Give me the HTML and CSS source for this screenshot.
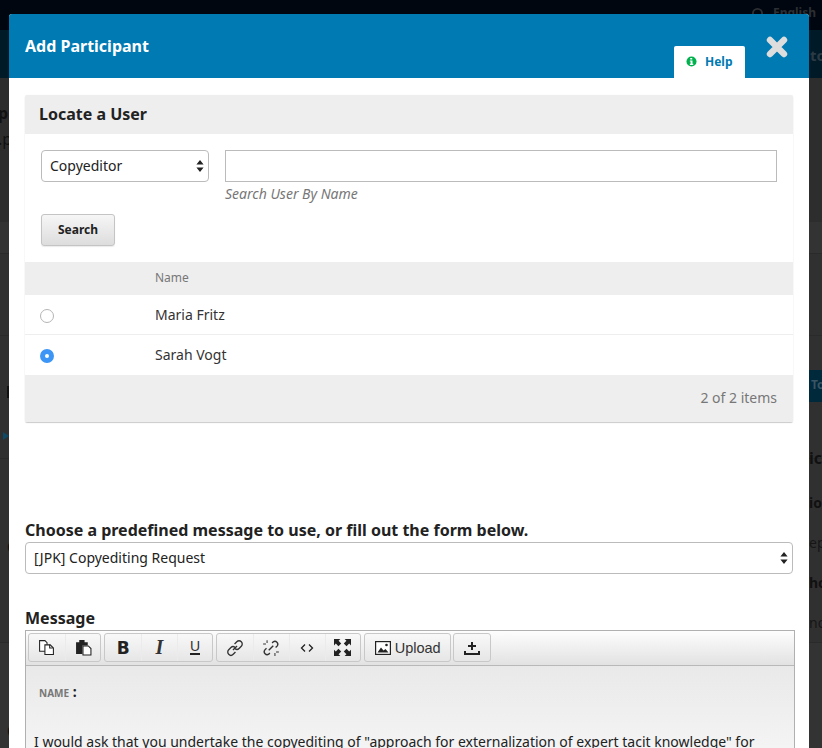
FILE: index.html
```html
<!DOCTYPE html>
<html lang="en">
  <head>
    <meta charset="UTF-8" />
    <meta name="viewport" content="width=device-width, initial-scale=1.0" />
    <title>Add Participant</title>
    <link rel="stylesheet" href="styles.css">
  </head>
  <body>
    <!-- page behind the modal, only the edges show -->
    <div class="backdrop">
      <div class="top-bar">
        <svg class="globe" viewBox="0 0 12 12" width="11" height="11"><circle cx="6" cy="6" r="5" fill="none" stroke="#2c2f33" stroke-width="2" /></svg>
        <span class="lang">English</span>
      </div>
      <div class="nav-bar"><span class="nav-peek">to</span></div>
      <div class="page-body">
        <div class="side side-left">
          <div class="peek peek-l1">p</div>
          <div class="peek peek-l2">.p</div>
          <div class="peek-mark"></div>
          <div class="peek-tri"></div>
          <div class="peek peek-l4">C</div>
          <div class="peek peek-l5">C</div>
        </div>
        <div class="side side-right">
          <div class="peek-btn">To</div>
          <div class="peek peek-r1">ic</div>
          <div class="peek peek-r2">ior</div>
          <div class="peek peek-r3 thin">ep</div>
          <div class="peek peek-r4">hor</div>
          <div class="peek peek-r5 thin">nos</div>
        </div>
      </div>
    </div>

    <div class="modal">
      <div class="modal-head">
        <h2>Add Participant</h2>
        <a class="help-tab">
          <svg class="help-icon" viewBox="0 0 12 12" width="11" height="11">
            <circle cx="6" cy="6" r="5.5" fill="#00b24e" />
            <path d="M4.6 2.2h2.2v1.6H4.6zM4.2 4.8h2.9v3.6h.8v1.3H4.2V8.4H5V6.1h-.8z" fill="#fff" />
          </svg>
          Help
        </a>
        <svg class="close-icon" viewBox="0 0 22 22" width="22" height="22">
          <path d="M4 4l14 14M18 4L4 18" stroke="#ddd" stroke-width="6.4" stroke-linecap="round" />
        </svg>
      </div>

      <div class="modal-body">
        <div class="panel">
          <div class="panel-head">Locate a User</div>
          <div class="search-form">
            <div class="search-row">
              <div class="select role-select">
                Copyeditor
                <svg class="select-arrows" viewBox="0 0 8 12" width="8" height="12"><path d="M4 0l3.6 4.6H.4zM4 12L.4 7.4h7.2z" fill="#222" /></svg>
              </div>
              <div class="search-field">
                <input type="text" class="search-input" />
                <div class="hint">Search User By Name</div>
              </div>
            </div>
            <button type="button" class="search-btn">Search</button>
          </div>
          <div class="table-head">
            <span class="col-radio"></span>
            <span>Name</span>
          </div>
          <div class="table-row row-line">
            <span class="col-radio"><span class="radio"></span></span>
            <span>Maria Fritz</span>
          </div>
          <div class="table-row">
            <span class="col-radio"><span class="radio radio-on"></span></span>
            <span>Sarah Vogt</span>
          </div>
          <div class="table-foot">2 of 2 items</div>
        </div>

        <label class="field-label predefined">Choose a predefined message to use, or fill out the form below.</label>
        <div class="select message-select">
          [JPK] Copyediting Request
          <svg class="select-arrows" viewBox="0 0 8 12" width="8" height="12"><path d="M4 0l3.6 4.6H.4zM4 12L.4 7.4h7.2z" fill="#222" /></svg>
        </div>

        <label class="field-label message-label">Message</label>
        <div class="editor">
          <div class="toolbar">
            <div class="tool-group">
              <span class="tool">
                <svg viewBox="0 0 16 16" width="17" height="17" fill="#fff" stroke="#222" stroke-width="1"><path d="M1.5 1.500h5l2 2v8h-7z" /><path d="M6.500 5.500h5l3 3v6h-8z" /><path d="M11 5.500v3h3" fill="none" /></svg>
              </span>
              <span class="tool">
                <svg viewBox="0 0 16 16" width="17" height="17"><path d="M1 3h3V1h5v2h3v3H7v8H1z" fill="#222" /><path d="M7.500 6.500h5l2.500 2.500v6H7.500z" fill="#fff" stroke="#222" /></svg>
              </span>
            </div>
            <div class="tool-group">
              <span class="tool"><b class="glyph-b">B</b></span>
              <span class="tool"><b class="glyph-i">I</b></span>
              <span class="tool"><span class="glyph-u">U</span></span>
            </div>
            <div class="tool-group">
              <span class="tool">
                <svg viewBox="0 0 16 16" width="18" height="18" fill="none" stroke="#333" stroke-width="1.200"><path d="M6.200 9.800L9.800 6.200" /><path d="M7.600 4.400l2-2a2.600 2.600 0 0 1 4 4l-2 2a2.600 2.600 0 0 1-3.600 0" /><path d="M8.400 11.600l-2 2a2.600 2.600 0 0 1-4-4l2-2a2.600 2.600 0 0 1 3.600 0" /></svg>
              </span>
              <span class="tool">
                <svg viewBox="0 0 16 16" width="18" height="18" fill="none" stroke="#333" stroke-width="1.200"><path d="M9 3.500l1-1a2.600 2.600 0 0 1 3.600 3.600l-1.500 1.500" /><path d="M7 12.500l-1 1A2.600 2.600 0 0 1 2.400 9.900L4 8.300" /><path d="M6 10l4-4" /><path d="M4.500 1v2.500M1 4.500h2.500M11.500 15v-2.500M15 11.500h-2.500" stroke-width=".9" /></svg>
              </span>
              <span class="tool">
                <svg viewBox="0 0 16 16" width="16" height="16" fill="none" stroke="#222" stroke-width="1.300"><path d="M6 4.500L2.500 8 6 11.500M10 4.500L13.500 8 10 11.500" /></svg>
              </span>
              <span class="tool">
                <svg viewBox="0 0 16 16" width="17" height="17" fill="#222"><path d="M0 0h6L4.300 1.700 6.800 4.200 4.200 6.800 1.700 4.300 0 6zM16 0v6l-1.700-1.700-2.500 2.500-2.600-2.600 2.500-2.500L10 0zM0 16v-6l1.700 1.700 2.500-2.500 2.600 2.600-2.500 2.500L6 16zM16 16h-6l1.700-1.700-2.500-2.500 2.600-2.600 2.500 2.500L16 10z" /></svg>
              </span>
            </div>
            <div class="tool-group">
              <span class="tool tool-upload">
                <svg viewBox="0 0 16 14" width="16" height="14"><rect x=".6" y=".6" width="14.800" height="12.800" fill="#fff" stroke="#222" stroke-width="1.200" /><path d="M2.500 11.500l3.500-5 2.500 3 2-1.500 3 3.500z" fill="#222" /><circle cx="11.500" cy="4" r="1.300" fill="#222" /></svg>
                Upload
              </span>
            </div>
            <div class="tool-group insert-group">
              <span class="tool tool-insert">
                <svg viewBox="0 0 16 14" width="16" height="14" fill="#222"><path d="M7 1h2v3h3v2H9v3H7V6H4V4h3zM0 10h2v2h12v-2h2v4H0z" /></svg>
              </span>
            </div>
          </div>
          <div class="editor-content">
            <p class="name-line"><span class="name-tag">NAME</span> <span class="colon">:</span></p>
            <p class="body-text">I would ask that you undertake the copyediting of "approach for externalization of expert tacit knowledge" for</p>
          </div>
        </div>
      </div>
    </div>
  </body>
</html>
```

FILE: styles.css
```css
* {
  box-sizing: border-box;
}
html,
body {
  margin: 0;
  height: 748px;
  overflow: hidden;
}
body {
  font-family: "Noto Sans", Arial, sans-serif;
  font-size: 14px;
  color: #222;
  background: #2e2e2e;
}

/* page behind the modal */
.backdrop {
  height: 748px;
  overflow: hidden;
  display: flex;
  flex-direction: column;
}
.top-bar {
  height: 30px;
  flex: none;
  background: #00060f;
  display: flex;
  justify-content: flex-end;
  gap: 10px;
  padding: 5px 6px 0 0;
}
.globe {
  margin-top: 3px;
}
.lang {
  font-size: 12px;
  font-weight: 700;
  color: #2c2f33;
  line-height: 16px;
}
.nav-bar {
  height: 48px;
  flex: none;
  background: #001a28;
  display: flex;
  justify-content: flex-end;
}
.nav-peek {
  width: 13px;
  font-size: 15px;
  font-weight: 700;
  color: #2b3a44;
  line-height: 50px;
  padding-left: 1px;
  overflow: hidden;
}
.page-body {
  flex: 1;
  display: flex;
  justify-content: space-between;
  background: linear-gradient(
    #2d2d2d 0,
    #2d2d2d 144px,
    #333 144px,
    #333 175px,
    #2a2a2a 175px,
    #2a2a2a 176px,
    #303030 176px,
    #303030 257px,
    #2a2a2a 257px,
    #2a2a2a 258px,
    #303030 258px,
    #303030 380px,
    #2a2a2a 380px,
    #2a2a2a 381px,
    #303030 381px,
    #303030 564px,
    #2a2a2a 564px,
    #2a2a2a 565px,
    #333 565px,
    #333 100%
  );
}
.side {
  overflow: hidden;
  font-weight: 700;
  color: #111;
  line-height: 20px;
}
.side-left {
  width: 9px;
  padding-top: 25px;
}
.side-right {
  width: 13px;
  padding-top: 292px;
}
.peek {
  white-space: nowrap;
  height: 20px;
}
.side-left .peek {
  font-size: 16px;
}
.thin {
  font-weight: 400;
  color: #161616;
}
.peek-l1 {
  margin-left: -2px;
}
.peek-l2 {
  margin: 6px 0 0 -2px;
  font-weight: 400;
}
.peek-mark {
  width: 2px;
  height: 12px;
  background: #111;
  margin: 237px 0 0 7px;
}
.peek-tri {
  width: 0;
  margin: 34px 0 0 3px;
  border-left: 6px solid #0d4a66;
  border-top: 4px solid transparent;
  border-bottom: 4px solid transparent;
}
.peek-l4 {
  margin: 97px 0 0 7px;
}
.peek-l5 {
  margin: 164px 0 0 7px;
}
.peek-btn {
  height: 32px;
  background: #00293c;
  color: #3a5564;
  font-size: 12px;
  line-height: 30px;
  padding-left: 2px;
}
.peek-r1 {
  margin-top: 46px;
  font-size: 16px;
}
.peek-r2 {
  margin-top: 25px;
  font-size: 14px;
}
.peek-r3 {
  margin-top: 20px;
  font-size: 14px;
}
.peek-r4 {
  margin-top: 20px;
  font-size: 14px;
}
.peek-r5 {
  margin-top: 20px;
  font-size: 14px;
}

/* modal */
.modal {
  position: absolute;
  left: 9px;
  top: 14px;
  width: 800px;
  height: 734px;
  background: #fff;
  overflow: hidden;
  border-radius: 3px 3px 0 0;
}
.modal-head {
  height: 64px;
  background: #007ab2;
  display: flex;
  align-items: flex-start;
  padding-left: 16px;
}
.modal-head h2 {
  margin: 0;
  flex: 1;
  font-size: 16px;
  line-height: 64px;
  font-weight: 700;
  color: #fff;
}
.help-tab {
  margin-top: 32px;
  width: 71px;
  height: 32px;
  background: #fff;
  border-radius: 2px 2px 0 0;
  display: flex;
  align-items: center;
  gap: 8px;
  padding: 0 0 2px 12px;
  font-size: 12px;
  font-weight: 700;
  color: #007ab2;
}
.help-icon {
  margin-top: 1px;
}
.close-icon {
  margin: 22px 21px 0 21px;
}
.modal-body {
  padding: 17px 16px 0;
}

/* user search panel */
.panel {
  border-radius: 2px;
  box-shadow: 0 1px 1px rgba(0, 0, 0, 0.2), 0 0 1px rgba(0, 0, 0, 0.08);
}
.panel-head {
  height: 39px;
  background: #eee;
  border-radius: 2px 2px 0 0;
  padding-left: 14px;
  font-size: 16px;
  font-weight: 700;
  line-height: 39px;
  color: #222;
}
.search-form {
  padding: 16px;
}
.search-row {
  display: flex;
  gap: 16px;
}
.select {
  position: relative;
  height: 32px;
  background: #fff;
  border: 1px solid #bbb;
  border-radius: 4px;
  line-height: 30px;
  padding-left: 8px;
  font-size: 14px;
  color: #222;
}
.role-select {
  width: 168px;
  flex: none;
}
.select-arrows {
  position: absolute;
  right: 4px;
  top: 9px;
}
.search-field {
  flex: 1;
}
.search-input {
  display: block;
  width: 100%;
  height: 32px;
  border: 1px solid #bbb;
  background: #fff;
  border-radius: 0;
  margin: 0;
}
.hint {
  font-size: 14px;
  font-style: italic;
  line-height: 24px;
  color: #777;
}
.search-btn {
  display: block;
  margin-top: 8px;
  width: 74px;
  height: 32px;
  padding: 0 0 2px;
  background: linear-gradient(#f6f6f6, #ddd);
  border: 1px solid #c4c4c4;
  border-radius: 3px;
  font-family: inherit;
  font-size: 12px;
  font-weight: 700;
  color: #222;
  box-shadow: 0 1px 1px rgba(0, 0, 0, 0.08);
}
.table-head {
  height: 33px;
  padding-bottom: 2px;
  background: #eee;
  display: flex;
  align-items: center;
  font-size: 12px;
  color: #777;
}
.col-radio {
  width: 130px;
  flex: none;
  padding-left: 15px;
  display: flex;
  align-items: center;
}
.table-row {
  height: 40px;
  display: flex;
  align-items: center;
  line-height: 38px;
  color: #333;
}
.row-line {
  border-bottom: 1px solid #eee;
}
.radio {
  width: 14px;
  height: 14px;
  margin-top: 2px;
  border: 1.5px solid #b5b5b5;
  border-radius: 50%;
  background: #fff;
}
.radio-on {
  border: 5px solid #3d96f5;
}
.table-foot {
  height: 47px;
  background: #eee;
  text-align: right;
  padding-right: 16px;
  line-height: 46px;
  color: #777;
}

/* email form */
.field-label {
  display: block;
  font-size: 16px;
  font-weight: 700;
  line-height: 22px;
  color: #222;
}
.predefined {
  margin-top: 97px;
}
.message-select {
  margin-top: 1px;
  width: 768px;
  height: 32px;
  line-height: 30px;
}
.message-label {
  margin-top: 33px;
}
.editor {
  width: 770px;
  margin-top: 1px;
  border: 1px solid #b0b0b0;
  border-bottom: 0;
}
.toolbar {
  height: 35px;
  padding: 2px 2px 0;
  display: flex;
  gap: 3px;
  background: linear-gradient(#fdfdfd, #e2e2e2);
  border-bottom: 1px solid #b8b8b8;
}
.tool-group {
  height: 29px;
  display: flex;
  border: 1px solid #c8c8c8;
  border-radius: 3px;
  background: linear-gradient(#f8f8f8, #e6e6e6);
}
.insert-group {
  margin-left: -1px;
}
.tool {
  width: 35.7px;
  display: flex;
  align-items: center;
  justify-content: center;
  border-left: 1px solid #ebebeb;
}
.tool:first-child {
  border-left: 0;
}
.tool-upload {
  width: 85px;
  gap: 4px;
  font-family: "Liberation Sans", Arial, sans-serif;
  font-size: 14.5px;
  color: #333;
}
.tool-insert {
  width: 36px;
}
.glyph-b {
  font-family: "DejaVu Sans", sans-serif;
  font-size: 17px;
  color: #222;
}
.glyph-i {
  font-family: "Liberation Serif", serif;
  font-size: 20px;
  font-style: italic;
  color: #333;
}
.glyph-u {
  font-family: "Liberation Sans", sans-serif;
  font-size: 14px;
  line-height: 13px;
  border-bottom: 2px solid #222;
  color: #333;
}
.editor-content {
  height: 90px;
  padding: 15px 8px 0;
  background: linear-gradient(#e9e9e9, #f5f5f5);
}
.name-line {
  margin: 0;
  padding-left: 5px;
  line-height: 22px;
  font-size: 14px;
}
.name-tag {
  font-size: 10px;
  font-weight: 700;
  color: #777;
}
.colon {
  font-weight: 700;
}
.body-text {
  margin: 27px 0 0;
  line-height: 22px;
  white-space: nowrap;
  color: #222;
}
```
